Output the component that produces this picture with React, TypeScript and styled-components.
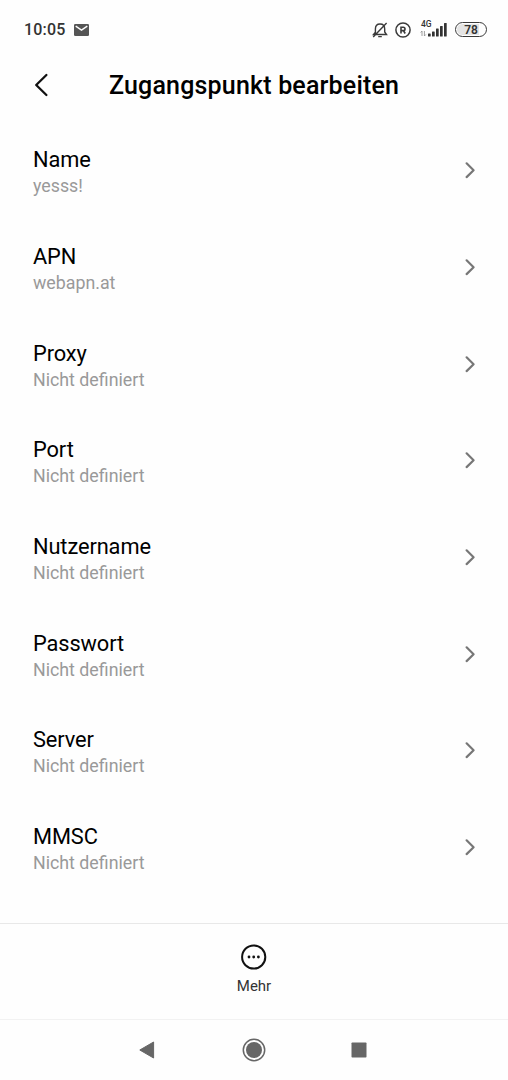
import React from "react";
import styled, { createGlobalStyle } from "styled-components";

const GlobalStyle = createGlobalStyle`
  * { box-sizing: border-box; }
  body { margin: 0; background: #fefefe; font-family: Roboto, "Liberation Sans", sans-serif; }
`;

const Screen = styled.div`
  display: flex;
  flex-direction: column;
  width: 508px;
  height: 1080px;
  overflow: hidden;
  background: #fefefe;
`;

const StatusBar = styled.div`
  display: flex;
  align-items: center;
  justify-content: space-between;
  height: 60px;
  padding: 0 21px 1px 24px;
`;

const StatusGroup = styled.div<{ $gap: number }>`
  display: flex;
  align-items: center;
  gap: ${(p) => p.$gap}px;
`;

const Clock = styled.span`
  padding-top: 1px;
  font-size: 16px;
  line-height: 20px;
  font-weight: 500;
  letter-spacing: 0.2px;
  color: #333;
`;

const Signal = styled.div`
  display: flex;
  align-items: flex-end;
  width: 28px;
  height: 20px;
  margin-left: 2px;
`;

const NetworkType = styled.div`
  display: flex;
  flex-direction: column;
  align-items: flex-start;
  width: 8px;
  height: 20px;
  font-size: 8.5px;
  line-height: 9px;
  font-weight: 500;
  color: #333;
  white-space: nowrap;

  span { margin-left: 1px; }
`;

const Battery = styled.div`
  display: flex;
  align-items: center;
  justify-content: center;
  width: 32px;
  height: 15px;
  border: 1.5px solid #3a3a3a;
  border-radius: 8px;
  background: linear-gradient(90deg, #e4e4e4 78%, #fefefe 78%);
  background-clip: content-box;
  padding: 1px;
  font-size: 12px;
  line-height: 12px;
  font-weight: 600;
  color: #333;
`;

const Header = styled.header`
  display: flex;
  align-items: center;
  height: 62px;
  padding: 0 0 11px 33px;
`;

const BackButton = styled.button`
  display: flex;
  width: 76px;
  padding: 0 0 2px;
  border: 0;
  background: none;
`;

const Title = styled.h1`
  margin: 0;
  padding-top: 1px;
  font-size: 25px;
  line-height: 32px;
  font-weight: 500;
  letter-spacing: 0.18px;
  color: #000;
  white-space: nowrap;
`;

const List = styled.main`
  flex: 1;
`;

const Row = styled.div`
  display: flex;
  align-items: center;
  justify-content: space-between;
  height: 96.7px;
  padding: 0 32px 0 33px;
`;

const Label = styled.div`
  padding-top: 5px;
  font-size: 21.8px;
  line-height: 28px;
  letter-spacing: -0.1px;
  color: #000;
`;

const Value = styled.div`
  padding-bottom: 2px;
  font-size: 17.8px;
  line-height: 23px;
  color: #999;
`;

const Actions = styled.footer`
  display: flex;
  flex-direction: column;
  align-items: center;
  height: 96px;
  padding-top: 20px;
  border-top: 1px solid #e8e8e8;
`;

const ActionLabel = styled.span`
  margin-top: 6px;
  font-size: 15px;
  line-height: 20px;
  color: #333;
`;

const NavBar = styled.nav`
  display: flex;
  align-items: center;
  justify-content: space-between;
  height: 61px;
  padding: 0 140px 1px 138px;
  border-top: 1px solid #f2f2f2;
`;

const HomeIcon = styled.svg`
  margin-left: 2px;
`;

const entries = [
  ["Name", "yesss!"],
  ["APN", "webapn.at"],
  ["Proxy", "Nicht definiert"],
  ["Port", "Nicht definiert"],
  ["Nutzername", "Nicht definiert"],
  ["Passwort", "Nicht definiert"],
  ["Server", "Nicht definiert"],
  ["MMSC", "Nicht definiert"],
];

export default function App() {
  return (
    <Screen>
      <GlobalStyle />
      <StatusBar>
        <StatusGroup $gap={8}>
          <Clock>10:05</Clock>
          <svg width="15" height="12" viewBox="0 0 15 12">
            <rect width="15" height="12" rx="1.3" fill="#555" />
            <path d="M1.7 2.2 7.5 6.2 13.3 2.2" fill="none" stroke="#fefefe" strokeWidth="1.4" />
          </svg>
        </StatusGroup>
        <StatusGroup $gap={7}>
          <svg width="16" height="16" viewBox="0 0 16 16" fill="none" stroke="#3a3a3a" strokeWidth="1.4">
            <path d="M3.4 12.2V7C3.4 3.9 5.2 2 8 2s4.7 1.9 4.7 5v3l1.8 2.5H1.5l1.9-2.3M6.2 14.6h3.6M1.2 15 14.6 1" />
          </svg>
          <svg width="16" height="16" viewBox="0 0 16 16" fill="none" stroke="#3a3a3a">
            <circle cx="8" cy="8" r="7.1" strokeWidth="1.5" />
            <path d="M6 11.5V5.2h2.3a1.7 1.7 0 0 1 0 3.4H6M8.4 8.5l1.8 3" strokeWidth="1.6" />
          </svg>
          <Signal>
            <NetworkType>
              <span>4G</span>
              <svg width="7" height="8" viewBox="0 0 7 8" fill="none" stroke="#888" strokeWidth=".8">
                <path d="M2 7V2L.7 3.5M4.4 2v5l1.4-1.5" />
              </svg>
            </NetworkType>
            <svg width="20" height="20" viewBox="0 0 20 20" fill="#333">
              <rect x="0" y="13.5" width="2.7" height="3" rx=".5" />
              <rect x="4" y="11.5" width="2.7" height="5" rx=".5" />
              <rect x="8" y="8.5" width="2.7" height="8" rx=".5" />
              <rect x="12" y="6" width="2.7" height="10.5" rx=".5" />
              <rect x="16" y="3" width="2.7" height="13.5" rx=".5" />
            </svg>
          </Signal>
          <Battery>78</Battery>
        </StatusGroup>
      </StatusBar>
      <Header>
        <BackButton aria-label="Zurück">
          <svg width="16" height="24" viewBox="0 0 16 24" fill="none" stroke="#111" strokeWidth="2.3" strokeLinecap="round" strokeLinejoin="round">
            <path d="M13.4 2 3.2 12l10.2 10" />
          </svg>
        </BackButton>
        <Title>Zugangspunkt bearbeiten</Title>
      </Header>
      <List>
        {entries.map(([label, value]) => (
          <Row key={label}>
            <div>
              <Label>{label}</Label>
              <Value>{value}</Value>
            </div>
            <svg width="12" height="18" viewBox="0 0 12 18" fill="none" stroke="#777" strokeWidth="2.2" strokeLinecap="round" strokeLinejoin="round">
              <path d="M2.6 2.3 9.6 9.2l-7 6.9" />
            </svg>
          </Row>
        ))}
      </List>
      <Actions>
        <svg width="26" height="26" viewBox="0 0 26 26" fill="#111">
          <circle cx="12.7" cy="13" r="11.6" fill="none" stroke="#111" strokeWidth="2" />
          <circle cx="8" cy="13" r="1.4" />
          <circle cx="12.7" cy="13" r="1.4" />
          <circle cx="17.4" cy="13" r="1.4" />
        </svg>
        <ActionLabel>Mehr</ActionLabel>
      </Actions>
      <NavBar>
        <svg width="18" height="18" viewBox="0 0 18 18">
          <path d="M15.6 1v16L1.8 9z" fill="#666" stroke="#666" strokeLinejoin="round" />
        </svg>
        <HomeIcon width="24" height="24" viewBox="0 0 24 24">
          <circle cx="12" cy="12" r="10.7" fill="none" stroke="#666" strokeWidth="1.5" />
          <circle cx="12" cy="12" r="8" fill="#666" />
        </HomeIcon>
        <svg width="18" height="18" viewBox="0 0 18 18">
          <rect x="1.5" y="1.5" width="15" height="15" rx=".8" fill="#666" />
        </svg>
      </NavBar>
    </Screen>
  );
}
